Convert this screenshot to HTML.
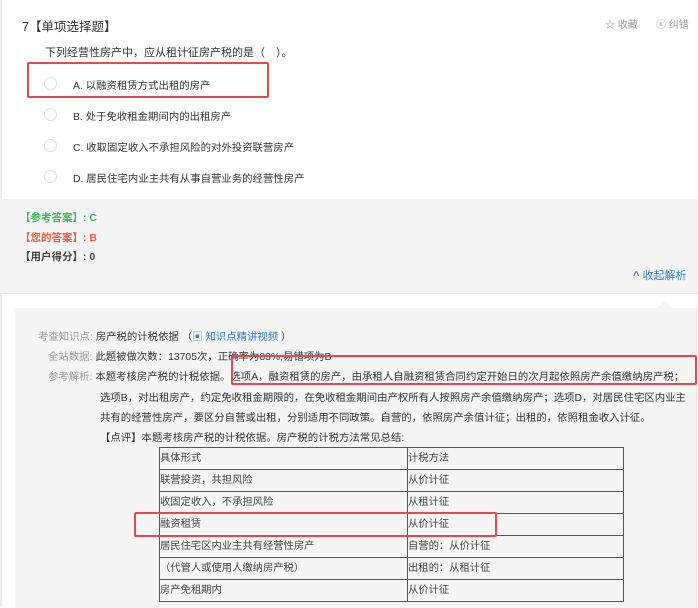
<!DOCTYPE html>
<html><head><meta charset="utf-8"><style>
*{margin:0;padding:0;box-sizing:border-box}
body{width:698px;height:607px;overflow:hidden;background:#fff;font-family:"Liberation Sans","Noto Sans CJK SC",sans-serif;color:#333;position:relative;font-size:12px}
.a{position:absolute;white-space:nowrap}
.radio{position:absolute;width:13px;height:13px;border:1px solid #ddd;border-radius:50%;background:#fff}
.red{position:absolute;border:2px solid #e8484c;border-radius:2px}
.t{font-size:10.4px}
table{position:absolute;left:159px;top:447px;width:465px;border-collapse:collapse;font-size:10.3px;color:#444}
td{border:1px solid #555;height:22px;padding:0;line-height:20px;vertical-align:middle}
</style></head><body>
<div class="a" style="left:0;top:0;width:2px;height:607px;background:#eee"></div>
<div class="a" style="left:22px;top:16px;font-size:12.5px;color:#333">7【单项选择题】</div>
<div class="a" style="left:605px;top:16px;font-size:10px;color:#999">☆ 收藏</div>
<div class="a" style="left:656px;top:16px;font-size:10px;color:#999">ⓧ 纠错</div>
<div class="a" style="left:45px;top:44px;font-size:11px">下列经营性房产中，应从租计征房产税的是（　）。</div>
<div class="radio" style="left:44px;top:77px"></div><div class="a t" style="left:73px;top:77px">A. 以融资租赁方式出租的房产</div>
<div class="radio" style="left:44px;top:108px"></div><div class="a t" style="left:73px;top:108px">B. 处于免收租金期间内的出租房产</div>
<div class="radio" style="left:44px;top:139px"></div><div class="a t" style="left:73px;top:139px">C. 收取固定收入不承担风险的对外投资联营房产</div>
<div class="radio" style="left:44px;top:170px"></div><div class="a t" style="left:73px;top:170px">D. 居民住宅内业主共有从事自营业务的经营性房产</div>
<div class="red" style="left:27px;top:62px;width:242px;height:36px"></div>
<div class="a" style="left:0;top:199px;width:698px;height:95px;background:#f4f4f4;border-bottom:1px solid #e6e6e6"></div>
<div class="a" style="left:20px;top:210px;font-size:10.5px;font-weight:bold;color:#3cb95b">【参考答案】: C</div>
<div class="a" style="left:20px;top:230px;font-size:10.5px;font-weight:bold;color:#f35a3a">【您的答案】: B</div>
<div class="a" style="left:20px;top:249px;font-size:10.5px;font-weight:bold;color:#444">【用户得分】: 0</div>
<div class="a" style="left:633px;top:267px;font-size:11px;color:#2f7fd6"><b>^</b> 收起解析</div>
<div class="a" style="left:15px;top:308px;width:682px;height:300px;background:#f5f5f5;border-right:1px solid #e6e6e6"></div>
<div class="a" style="left:657px;top:300px;width:0;height:0;border-left:8px solid transparent;border-right:8px solid transparent;border-bottom:8px solid #f5f5f5"></div>
<div class="a t" style="left:38px;top:328px;color:#999">考查知识点: <span style="color:#333">房产税的计税依据 （</span><span style="color:#2f7fd6">▣ 知识点精讲视频</span><span style="color:#333"> ）</span></div>
<div class="a t" style="left:48px;top:348px;color:#999">全站数据: <span style="color:#333">此题被做次数：13705次，正确率为83%,易错项为B</span></div>
<div class="a t" style="left:48px;top:368px;color:#999">参考解析: <span style="color:#333">本题考核房产税的计税依据。选项A，融资租赁的房产，由承租人自融资租赁合同约定开始日的次月起依照房产余值缴纳房产税；</span></div>
<div class="a t" style="left:100px;top:389px">选项B，对出租房产，约定免收租金期限的，在免收租金期间由产权所有人按照房产余值缴纳房产；选项D，对居民住宅区内业主</div>
<div class="a t" style="left:100px;top:409px">共有的经营性房产，要区分自营或出租，分别适用不同政策。自营的，依照房产余值计征；出租的，依照租金收入计征。</div>
<div class="a t" style="left:100px;top:429px">【点评】本题考核房产税的计税依据。房产税的计税方法常见总结:</div>
<div class="red" style="left:231px;top:355px;width:466px;height:30px"></div>
<table>
<tr><td style="width:248px">具体形式</td><td>计税方法</td></tr>
<tr><td>联营投资，共担风险</td><td>从价计征</td></tr>
<tr><td>收固定收入，不承担风险</td><td>从租计征</td></tr>
<tr><td>融资租赁</td><td>从价计征</td></tr>
<tr><td>居民住宅区内业主共有经营性房产</td><td>自营的：从价计征</td></tr>
<tr><td>（代管人或使用人缴纳房产税）</td><td>出租的：从租计征</td></tr>
<tr><td>房产免租期内</td><td>从价计征</td></tr>
</table>
<div class="red" style="left:134px;top:512px;width:363px;height:25px"></div>
</body></html>
